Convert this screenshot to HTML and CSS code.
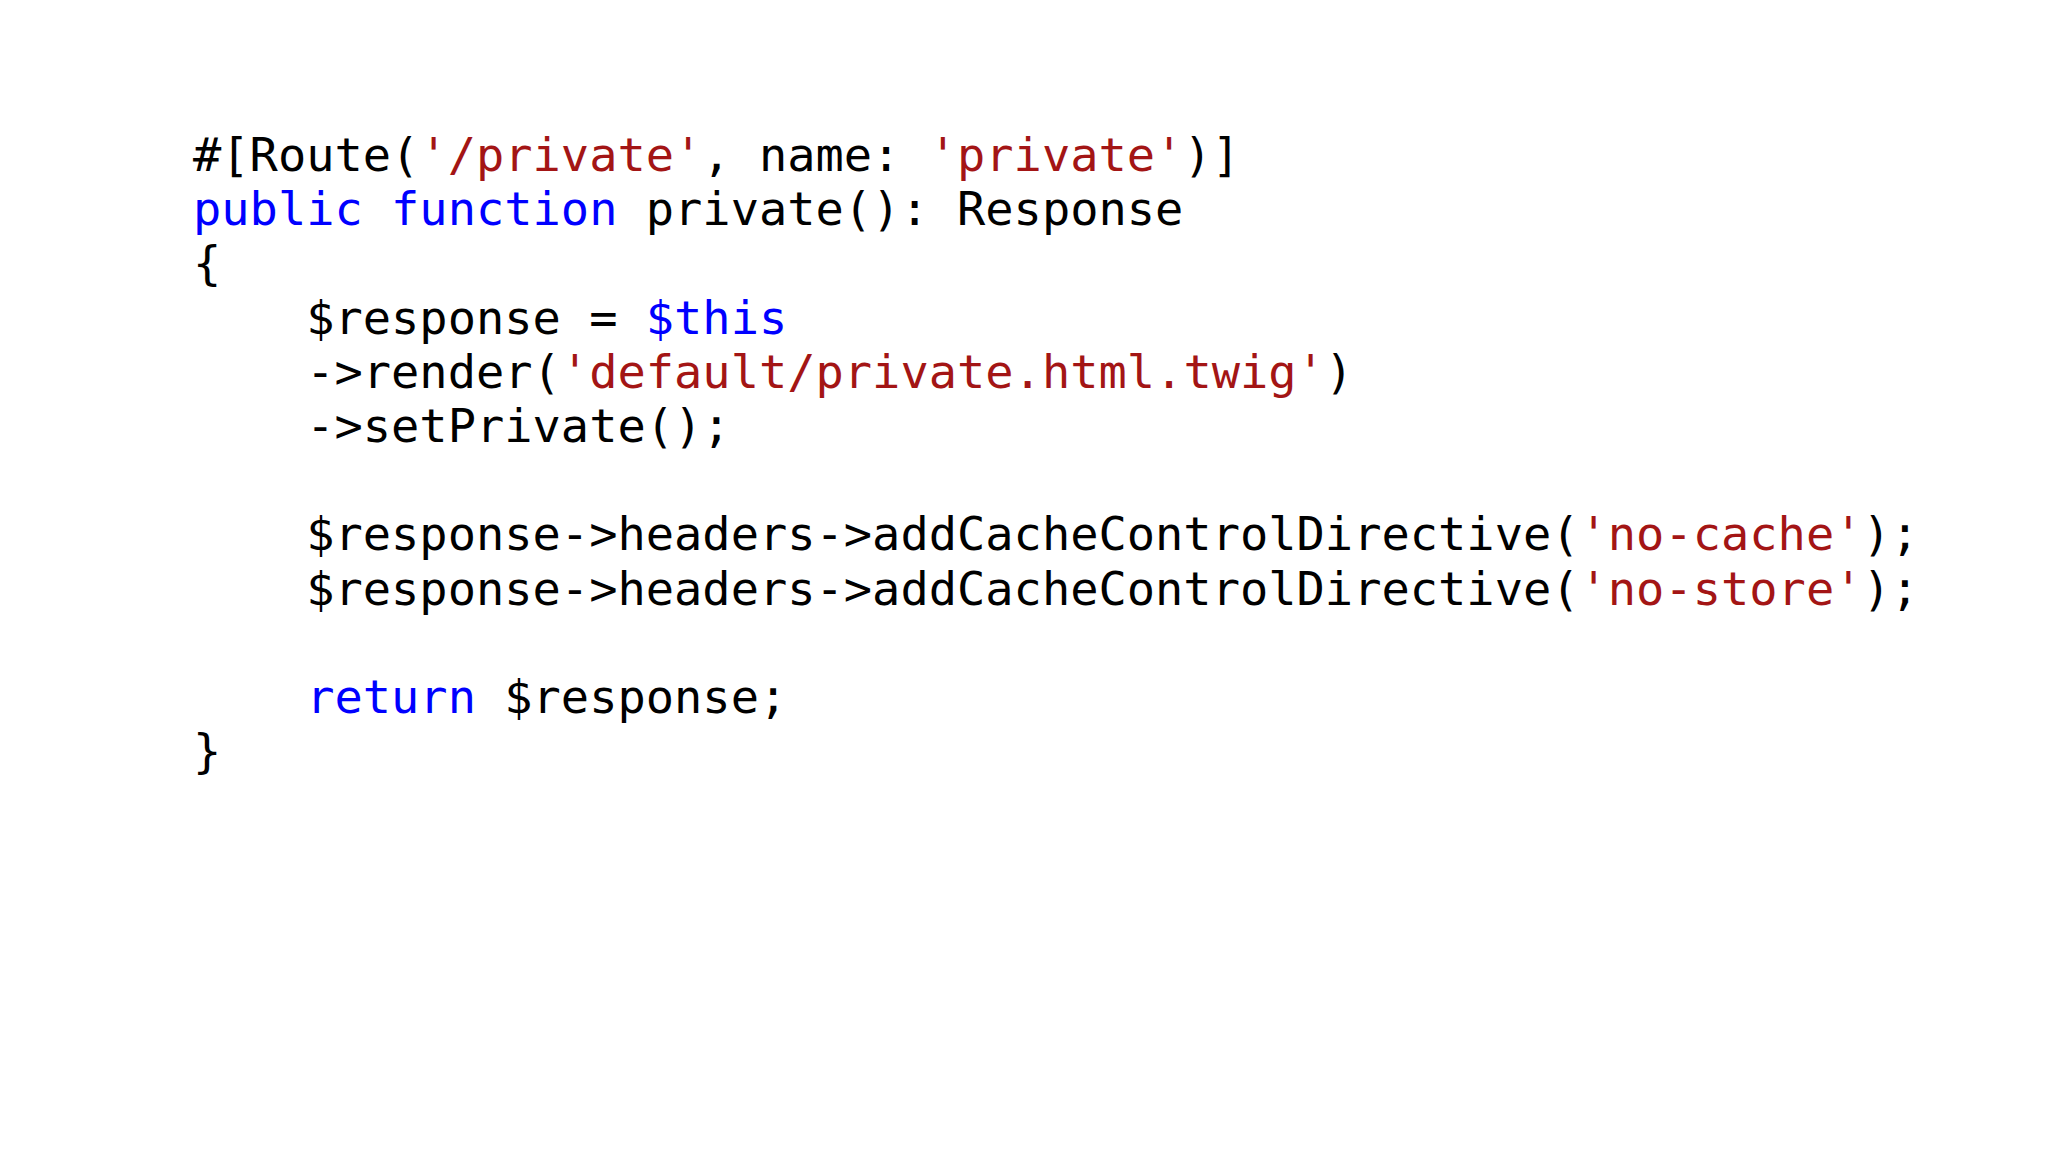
FILE: index.html
```html
<!DOCTYPE html>
<html lang="en">
<head>
<meta charset="utf-8">
<title>Symfony private response</title>
<link rel="stylesheet" href="styles.css">
</head>
<body>
<main class="slide">
<pre class="code"><code>#[Route(<span class="str">'/private'</span>, name: <span class="str">'private'</span>)]
<span class="kw">public</span> <span class="kw">function</span> private(): Response
{
    $response = <span class="kw">$this</span>
    ->render(<span class="str">'default/private.html.twig'</span>)
    ->setPrivate();

    $response->headers->addCacheControlDirective(<span class="str">'no-cache'</span>);
    $response->headers->addCacheControlDirective(<span class="str">'no-store'</span>);

    <span class="kw">return</span> $response;
}</code></pre>
</main>
</body>
</html>
```

FILE: styles.css
```css
html, body {
  margin: 0;
  padding: 0;
  background: #ffffff;
}

.slide {
  width: 2048px;
  height: 1152px;
  box-sizing: border-box;
  padding: 128px 0 0 193px;
  background: #ffffff;
}

.code {
  margin: 0;
  font-family: "DejaVu Sans Mono", "Liberation Mono", monospace;
  font-size: 47px;
  line-height: 54.2px;
  color: #000000;
  white-space: pre;
}

.kw {
  color: #0000ff;
}

.str {
  color: #a31515;
}
```
